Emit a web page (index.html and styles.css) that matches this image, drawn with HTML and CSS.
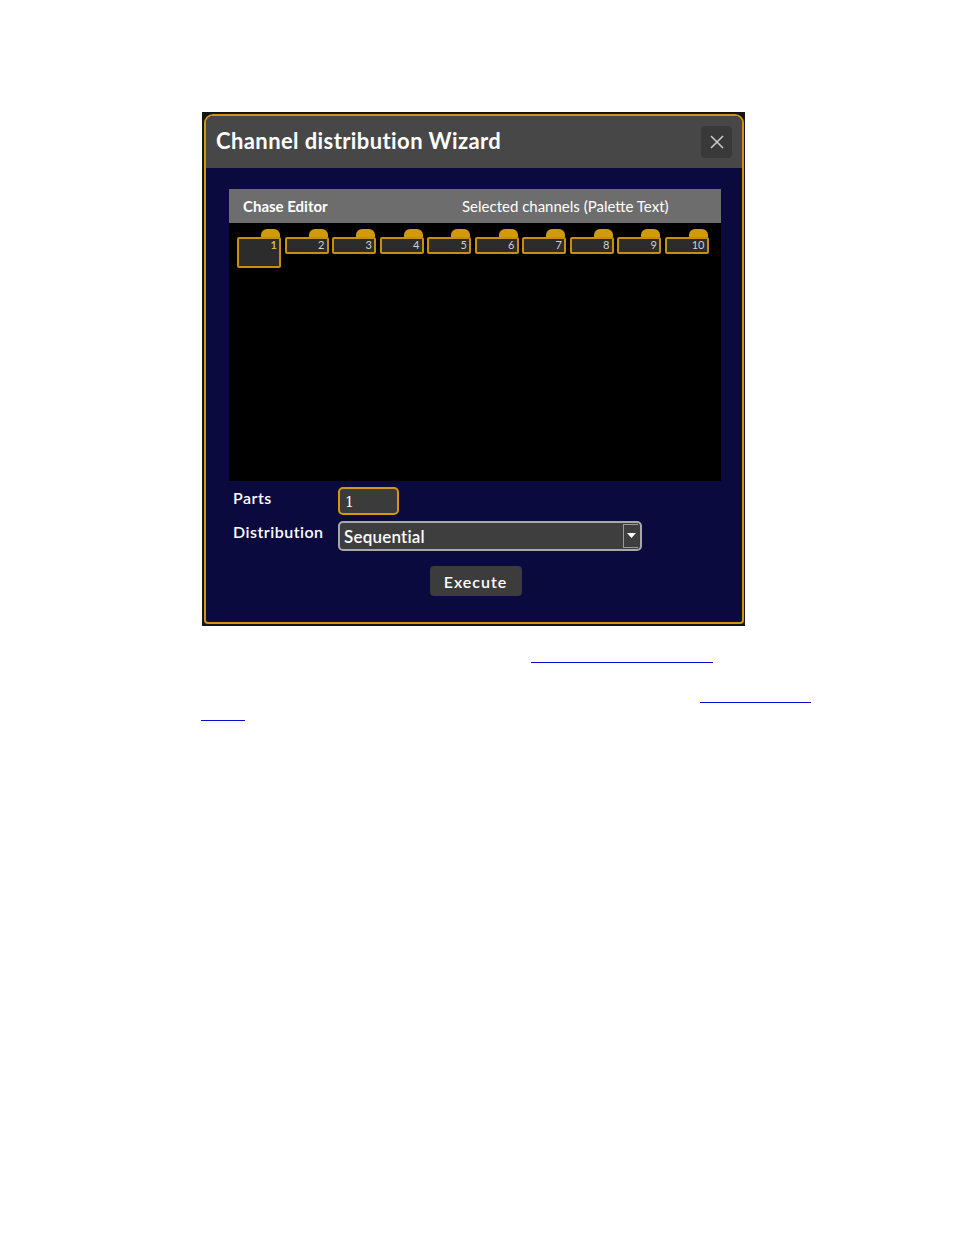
FILE: index.html
```html
<!DOCTYPE html>
<html>
<head>
<meta charset="utf-8">
<link rel="stylesheet" href="styles.css">
</head>
<body>
<div class="shot">
  <div class="dialog">
    <div class="titlebar">
      <div class="title">Channel distribution Wizard</div>
      <div class="close">
        <svg width="16" height="16" viewBox="0 0 16 16"><path d="M2 2 L14 14 M14 2 L2 14" stroke="#c8c8c8" stroke-width="1.6" fill="none"/></svg>
      </div>
    </div>
    <div class="body">
      <div class="panel">
        <div class="panel-head">
          <span class="ph-left">Chase Editor</span>
          <span class="ph-right">Selected channels (Palette Text)</span>
        </div>
        <div class="panel-area">
          <div class="cells">
            <div class="cell sel"><div class="tab"></div><div class="box">1</div></div>
            <div class="cell"><div class="tab"></div><div class="box">2</div></div>
            <div class="cell"><div class="tab"></div><div class="box">3</div></div>
            <div class="cell"><div class="tab"></div><div class="box">4</div></div>
            <div class="cell"><div class="tab"></div><div class="box">5</div></div>
            <div class="cell"><div class="tab"></div><div class="box">6</div></div>
            <div class="cell"><div class="tab"></div><div class="box">7</div></div>
            <div class="cell"><div class="tab"></div><div class="box">8</div></div>
            <div class="cell"><div class="tab"></div><div class="box">9</div></div>
            <div class="cell"><div class="tab"></div><div class="box">10</div></div>
          </div>
        </div>
      </div>
      <div class="row">
        <div class="label">Parts</div>
        <div class="input">1</div>
      </div>
      <div class="row row2">
        <div class="label">Distribution</div>
        <div class="select">
          <span class="sel-text">Sequential</span>
          <span class="arrow"><svg width="9" height="6" viewBox="0 0 9 6"><path d="M0 0 H9 L4.5 5 Z" fill="#ffffff"/></svg></span>
        </div>
      </div>
      <div class="actions">
        <div class="btn">Execute</div>
      </div>
    </div>
  </div>
</div>
<div class="doc">
  <div class="line l1"><span class="link a1"></span></div>
  <div class="line l2"><span class="link a2"></span></div>
  <div class="line l3"><span class="link a3"></span></div>
</div>
</body>
</html>
```
FILE: styles.css
```css
html, body { margin: 0; padding: 0; background: #ffffff; }
body { font-family: Lato, "Open Sans", sans-serif; }

.shot {
  margin: 112px 0 0 202px;
  width: 543px;
  height: 514px;
  box-sizing: border-box;
  padding: 2px 1px 2px 2px;
  background: #141414;
}
.dialog {
  height: 100%;
  box-sizing: border-box;
  border: 2px solid #cf960c;
  border-radius: 9px 9px 4px 4px;
  overflow: hidden;
  display: flex;
  flex-direction: column;
  background: #0b0a3e;
}
.titlebar {
  height: 52px;
  flex: none;
  background: #474747;
  display: flex;
  align-items: center;
  justify-content: space-between;
  padding: 0 10px 0 10px;
}
.title {
  color: #ffffff;
  font-weight: 700;
  font-size: 22px;
  letter-spacing: 0.4px;
  margin-top: -3px;
}
.close {
  width: 31px;
  height: 32px;
  border-radius: 4px;
  background: #393939;
  display: flex;
  align-items: center;
  justify-content: center;
}
.body {
  flex: 1;
  padding: 21px 21px 0 23px;
  display: flex;
  flex-direction: column;
}
.panel { display: flex; flex-direction: column; width: 492px; }
.panel-head {
  height: 34px;
  background: #6d6d6d;
  display: flex;
  align-items: center;
  color: #ffffff;
  font-size: 15px;
  padding-left: 14px;
}
.ph-left { font-weight: 700; width: 219px; }
.ph-right { font-weight: 400; }
.panel-area {
  height: 258px;
  background: #000000;
  padding: 6px 0 0 8px;
  box-sizing: border-box;
}
.cells { display: flex; gap: 3.5px; align-items: flex-start; }
.cell { width: 44px; display: flex; flex-direction: column; align-items: flex-end; }
.tab {
  width: 19px;
  height: 8px;
  background: #d19a0a;
  border-radius: 6px 6px 0 0;
  margin-right: 1px;
}
.box {
  width: 44px;
  height: 17px;
  box-sizing: border-box;
  border: 2px solid #c78f0c;
  border-radius: 2px;
  background: #2c2c2c;
  color: #d0d0d0;
  font-size: 11px;
  text-align: right;
  padding-right: 2px;
  line-height: 12px;
}
.cell.sel .box { height: 31px; color: #d8b840; font-weight: 700; }

.row { display: flex; margin-top: 6px; align-items: flex-start; }
.label {
  width: 105px;
  padding-left: 4px;
  color: #ffffff;
  font-size: 16px;
  font-weight: 600;
  letter-spacing: 0.5px;
  padding-top: 1px;
}
.input {
  width: 61px;
  height: 28px;
  box-sizing: border-box;
  border: 2px solid #d3980d;
  border-radius: 5px;
  background: #3b3b3b;
  color: #ffffff;
  font-family: "DejaVu Serif", serif;
  font-size: 14px;
  padding: 5px 0 0 5px;
}
.select {
  width: 304px;
  height: 30px;
  box-sizing: border-box;
  border: 2px solid #a8a8a8;
  border-radius: 5px;
  background: #3e3e3e;
  display: flex;
  align-items: center;
  justify-content: space-between;
  padding: 0 2px 0 4px;
}
.sel-text { color: #ffffff; font-size: 17px; font-weight: 600; letter-spacing: 0.2px; margin-top: 1px; }
.arrow {
  width: 15px;
  height: 24px;
  box-sizing: border-box;
  border: 1px solid #9a9a9a;
  border-right: none;
  display: flex;
  align-items: center;
  justify-content: center;
  padding-left: 1px;
}
.actions { display: flex; justify-content: center; margin-top: 15px; padding-left: 1px; }
.btn {
  width: 92px;
  height: 30px;
  border-radius: 4px;
  background: #3c3c3c;
  color: #ffffff;
  font-size: 16px;
  font-weight: 600;
  letter-spacing: 1px;
  display: flex;
  align-items: center;
  justify-content: center;
}

.doc { position: relative; }
.line { height: 1px; display: flex; }
.l1 { margin-top: 36px; padding-left: 531px; }
.l2 { margin-top: 39px; padding-left: 700px; }
.l3 { margin-top: 17px; padding-left: 201px; }
.link { display: block; height: 1px; background: #0a0ad2; }
.a1 { width: 182px; }
.a2 { width: 111px; }
.a3 { width: 44px; }
```
